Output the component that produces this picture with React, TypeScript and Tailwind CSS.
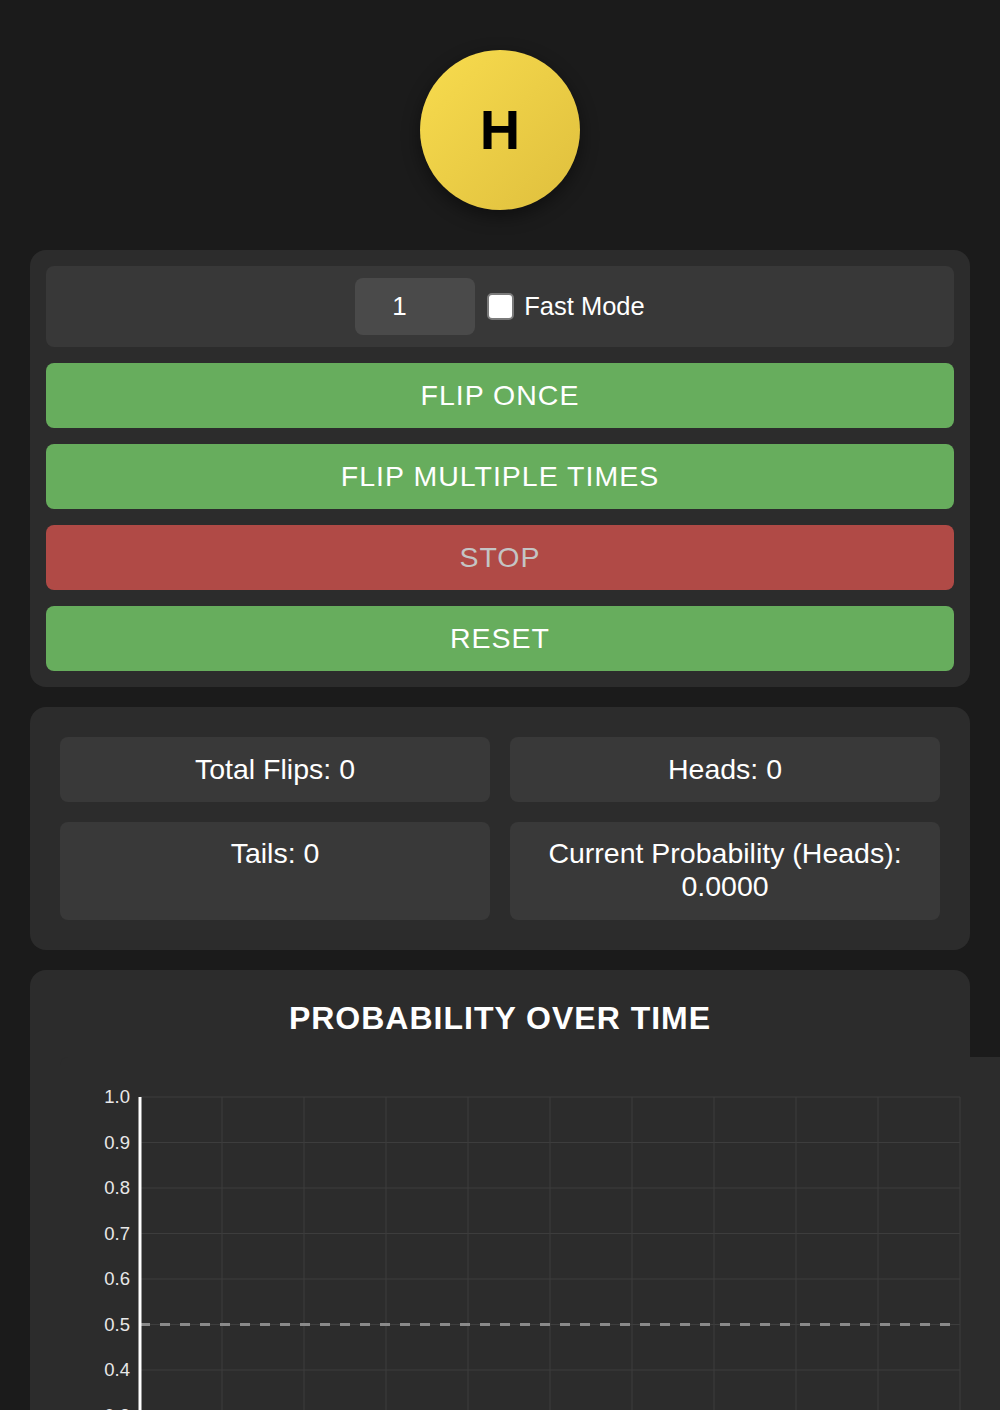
import React, { useState } from 'react';

const font = { fontFamily: '"Liberation Sans", Arial, sans-serif' };

const ChartGrid: React.FC = () => {
    const top = 40;
    const step = 45.5;
    const left = 80;
    const right = 900;
    const rows = [1.0, 0.9, 0.8, 0.7, 0.6, 0.5, 0.4, 0.3, 0.2, 0.1, 0.0];
    const cols = Array.from({ length: 10 }, (_, i) => left + 82 * (i + 1));
    return (
        <svg width="950" height="520" className="block">
            {rows.map((v, i) => (
                <line key={'h' + i} x1={left} x2={right} y1={top + i * step} y2={top + i * step} stroke="#3d3d3d" strokeWidth="1" />
            ))}
            {cols.map((x, i) => (
                <line key={'v' + i} x1={x} x2={x} y1={top} y2={520} stroke="#3d3d3d" strokeWidth="1" />
            ))}
            <line x1={left} x2={right - 8} y1={top + 5 * step} y2={top + 5 * step} stroke="#8a8a8a" strokeWidth="3" strokeDasharray="10 10" />
            <line x1={left} x2={left} y1={top} y2={520} stroke="#ffffff" strokeWidth="3" />
            {rows.map((v, i) => (
                <text key={'t' + i} x={70} y={top + i * step + 6} textAnchor="end" fill="#e8e8e8" fontSize="18.5" style={font}>{v.toFixed(1)}</text>
            ))}
        </svg>
    );
};

const App: React.FC = () => {
    const [count, setCount] = useState('1');
    const [fast, setFast] = useState(false);

    return (
        <div className="min-h-[1410px] bg-[#1b1b1b] overflow-hidden text-white" style={font}>
            <div className="px-[30px] pt-[50px]">
                <div className="flex justify-center">
                    <div className="w-[160px] h-[160px] rounded-full bg-gradient-to-br from-[#f8dc4e] to-[#dfbf3d] shadow-[0_6px_18px_rgba(0,0,0,0.45)] flex items-center justify-center">
                        <span className="text-[56px] font-bold text-black leading-none">H</span>
                    </div>
                </div>

                <div className="mt-[40px] bg-[#2c2c2c] rounded-2xl p-4 flex flex-col gap-4">
                    <div className="bg-[#383838] rounded-lg h-[81px] flex items-center justify-center gap-3">
                        <input
                            value={count}
                            onChange={e => setCount(e.target.value)}
                            className="w-[120px] h-[57px] rounded-lg bg-[#4a4a4a] text-white text-[26px] pl-[37px] outline-none"
                        />
                        <label className="flex items-center gap-[10px] cursor-pointer" onClick={() => setFast(!fast)}>
                            <span className="w-[27px] h-[27px] rounded-[5px] bg-white border-2 border-[#7a7a7a]" />
                            <span className="text-[25.5px]">Fast Mode</span>
                        </label>
                    </div>
                    <button className="h-[65px] rounded-lg bg-[#67ad5d] text-[28.5px] tracking-[1px] text-white">FLIP ONCE</button>
                    <button className="h-[65px] rounded-lg bg-[#67ad5d] text-[28.5px] tracking-[1px] text-white">FLIP MULTIPLE TIMES</button>
                    <button disabled className="h-[65px] rounded-lg bg-[#b04a46] text-[28.5px] tracking-[1px] text-[#c4c4c4]">STOP</button>
                    <button className="h-[65px] rounded-lg bg-[#67ad5d] text-[28.5px] tracking-[1px] text-white">RESET</button>
                </div>

                <div className="mt-5 bg-[#2c2c2c] rounded-2xl p-[30px] grid grid-cols-2 gap-5">
                    <div className="bg-[#393939] rounded-lg h-[65px] flex items-center justify-center text-[28.5px]">Total Flips: 0</div>
                    <div className="bg-[#393939] rounded-lg h-[65px] flex items-center justify-center text-[28.5px]">Heads: 0</div>
                    <div className="bg-[#393939] rounded-lg h-[98px] pt-[15px] text-center text-[28.5px] leading-[33px]">Tails: 0</div>
                    <div className="bg-[#393939] rounded-lg h-[98px] pt-[15px] text-center text-[28.5px] leading-[33px]">Current Probability (Heads):<br />0.0000</div>
                </div>

                <div className="mt-5 bg-[#2c2c2c] rounded-t-2xl pt-[30px] pl-[30px] w-[940px]">
                    <h2 className="text-center pr-[30px] text-[32px] font-bold leading-[36px] tracking-[1px]">PROBABILITY OVER TIME</h2>
                    <div className="mt-[21px] w-[960px] rounded-lg bg-[#2c2c2c]">
                        <ChartGrid />
                    </div>
                </div>
            </div>
        </div>
    );
};

export default App;
